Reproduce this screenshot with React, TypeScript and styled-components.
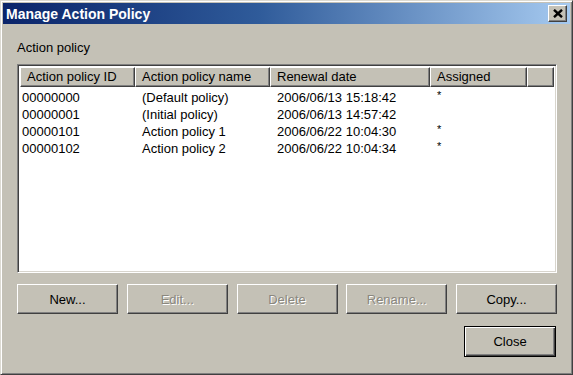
import React from 'react';
import styled, { createGlobalStyle } from 'styled-components';

const face = '#c4c1b6';

const GlobalStyle = createGlobalStyle`
  html, body {
    margin: 0;
    padding: 0;
    background: ${face};
    overflow: hidden;
  }
  body {
    font-family: "Liberation Sans", Arial, sans-serif;
    font-size: 13px;
    color: #000;
  }
`;

const Window = styled.div`
  box-sizing: border-box;
  width: 573px;
  height: 375px;
  background: ${face};
  border: 1px solid;
  border-color: #dcdad2 #404040 #404040 #dcdad2;
  box-shadow: inset 1px 1px #ffffff, inset -1px -1px #808080;
  padding: 2px;
  display: flex;
  flex-direction: column;
`;

const TitleBar = styled.div`
  height: 21px;
  display: flex;
  align-items: center;
  justify-content: space-between;
  padding: 0 3px 0 3px;
  background: linear-gradient(to right, #0a246a 0%, #2f5b9a 45%, #a6caf0 100%);
`;

const Title = styled.span`
  color: #fff;
  font-weight: bold;
  font-size: 14px;
`;

const TitleButton = styled.button`
  box-sizing: border-box;
  width: 19px;
  height: 17px;
  padding: 0;
  margin: 0;
  display: flex;
  align-items: center;
  justify-content: center;
  background: ${face};
  border: 1px solid;
  border-color: #fff #404040 #404040 #fff;
  box-shadow: inset -1px -1px #808080;
`;

const Content = styled.div`
  flex: 1;
  display: flex;
  flex-direction: column;
  padding: 16px 13px 0 14px;
`;

const Label = styled.div`
  line-height: 15px;
  height: 15px;
`;

const ListBox = styled.div`
  box-sizing: border-box;
  margin-top: 9px;
  height: 209px;
  background: #fff;
  border: 1px solid;
  border-color: #808080 #fff #fff #808080;
  box-shadow: inset 1px 1px #404040, inset -1px -1px #d8d5cd;
  padding: 2px 2px;
  display: flex;
  flex-direction: column;
`;

const columns = '115px 135px 160px 97px 1fr';

const HeaderRow = styled.div`
  display: grid;
  grid-template-columns: ${columns};
  height: 20px;
`;

const HeaderCell = styled.div`
  box-sizing: border-box;
  background: ${face};
  border: 1px solid;
  border-color: #fff #404040 #404040 #fff;
  box-shadow: inset -1px -1px #808080;
  padding-left: 6px;
  line-height: 17px;
  white-space: nowrap;
  overflow: hidden;
`;

const Rows = styled.div`
  padding-top: 2px;
`;

const Row = styled.div`
  display: grid;
  grid-template-columns: ${columns};
  height: 17px;
  line-height: 17px;
`;

const Cell = styled.div<{ $first?: boolean; $mark?: boolean }>`
  padding-left: ${p => (p.$first ? '2px' : '7px')};
  white-space: nowrap;
  font-size: ${p => (p.$mark ? '11px' : '13px')};
  line-height: ${p => (p.$mark ? '13px' : '17px')};
`;

const ButtonRow = styled.div`
  display: flex;
  justify-content: space-between;
  margin-top: 11px;
`;

const Button = styled.button<{ $default?: boolean }>`
  box-sizing: border-box;
  width: ${p => (p.$default ? '92px' : '101px')};
  height: ${p => (p.$default ? '31px' : '30px')};
  margin: 0;
  padding: 0;
  font-family: "Liberation Sans", Arial, sans-serif;
  font-size: 13px;
  color: #000;
  background: ${face};
  border: 1px solid;
  border-color: ${p => (p.$default ? '#000' : '#fff #404040 #404040 #fff')};
  box-shadow: ${p =>
    p.$default
      ? 'inset 1px 1px #fff, inset -1px -1px #404040, inset -2px -2px #808080'
      : 'inset -1px -1px #808080'};

  &:disabled {
    color: #8a877e;
    text-shadow: 1px 1px #fff;
  }
`;

const Footer = styled.div`
  display: flex;
  justify-content: flex-end;
  margin-top: 12px;
  padding-right: 1px;
`;

const policies = [
  { id: '00000000', name: '(Default policy)', date: '2006/06/13 15:18:42', assigned: true },
  { id: '00000001', name: '(Initial policy)', date: '2006/06/13 14:57:42', assigned: false },
  { id: '00000101', name: 'Action policy 1', date: '2006/06/22 10:04:30', assigned: true },
  { id: '00000102', name: 'Action policy 2', date: '2006/06/22 10:04:34', assigned: true },
];

const actions = [
  { label: 'New...', enabled: true },
  { label: 'Edit...', enabled: false },
  { label: 'Delete', enabled: false },
  { label: 'Rename...', enabled: false },
  { label: 'Copy...', enabled: true },
];

const CloseGlyph = () => (
  <svg width="10" height="9" viewBox="0 0 10 9">
    <path d="M1 0.8 L9 8.2 M9 0.8 L1 8.2" stroke="#000" strokeWidth="2.4" />
  </svg>
);

export default function App() {
  return (
    <>
      <GlobalStyle />
      <Window>
        <TitleBar>
          <Title>Manage Action Policy</Title>
          <TitleButton aria-label="Close">
            <CloseGlyph />
          </TitleButton>
        </TitleBar>
        <Content>
          <Label>Action policy</Label>
          <ListBox>
            <HeaderRow>
              <HeaderCell>Action policy ID</HeaderCell>
              <HeaderCell>Action policy name</HeaderCell>
              <HeaderCell>Renewal date</HeaderCell>
              <HeaderCell>Assigned</HeaderCell>
              <HeaderCell />
            </HeaderRow>
            <Rows>
              {policies.map(p => (
                <Row key={p.id}>
                  <Cell $first>{p.id}</Cell>
                  <Cell>{p.name}</Cell>
                  <Cell>{p.date}</Cell>
                  <Cell $mark>{p.assigned ? '*' : ''}</Cell>
                </Row>
              ))}
            </Rows>
          </ListBox>
          <ButtonRow>
            {actions.map(a => (
              <Button key={a.label} disabled={!a.enabled}>
                {a.label}
              </Button>
            ))}
          </ButtonRow>
          <Footer>
            <Button $default>Close</Button>
          </Footer>
        </Content>
      </Window>
    </>
  );
}
